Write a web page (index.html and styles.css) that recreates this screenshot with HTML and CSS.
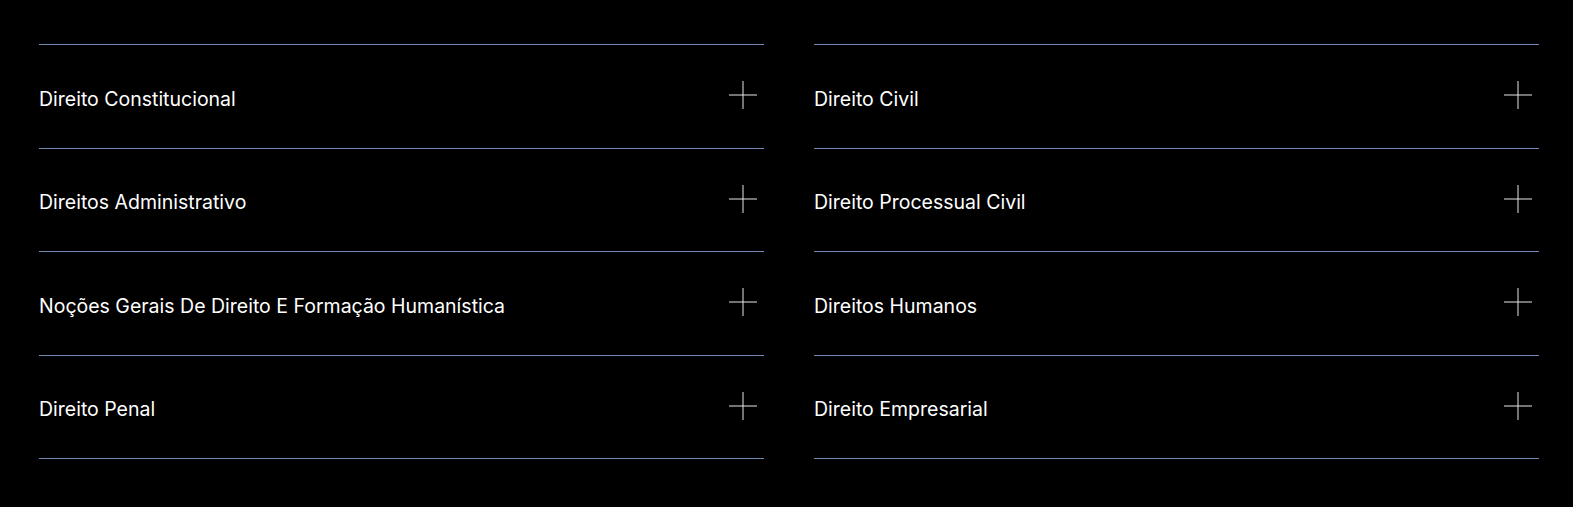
FILE: index.html
```html
<!DOCTYPE html>
<html lang="pt">
<head>
<meta charset="utf-8">
<title>Disciplinas</title>
<link rel="stylesheet" href="styles.css">
</head>
<body>
<div class="grid">
  <div class="col">
    <div class="item"><span class="label">Direito Constitucional</span><svg class="plus" viewBox="0 0 28 28" width="28" height="28"><line x1="0" y1="14" x2="28" y2="14"/><line x1="14" y1="0" x2="14" y2="28"/></svg></div>
    <div class="item"><span class="label">Direitos Administrativo</span><svg class="plus" viewBox="0 0 28 28" width="28" height="28"><line x1="0" y1="14" x2="28" y2="14"/><line x1="14" y1="0" x2="14" y2="28"/></svg></div>
    <div class="item"><span class="label">Noções Gerais De Direito E Formação Humanística</span><svg class="plus" viewBox="0 0 28 28" width="28" height="28"><line x1="0" y1="14" x2="28" y2="14"/><line x1="14" y1="0" x2="14" y2="28"/></svg></div>
    <div class="item"><span class="label">Direito Penal</span><svg class="plus" viewBox="0 0 28 28" width="28" height="28"><line x1="0" y1="14" x2="28" y2="14"/><line x1="14" y1="0" x2="14" y2="28"/></svg></div>
  </div>
  <div class="col">
    <div class="item"><span class="label">Direito Civil</span><svg class="plus" viewBox="0 0 28 28" width="28" height="28"><line x1="0" y1="14" x2="28" y2="14"/><line x1="14" y1="0" x2="14" y2="28"/></svg></div>
    <div class="item"><span class="label">Direito Processual Civil</span><svg class="plus" viewBox="0 0 28 28" width="28" height="28"><line x1="0" y1="14" x2="28" y2="14"/><line x1="14" y1="0" x2="14" y2="28"/></svg></div>
    <div class="item"><span class="label">Direitos Humanos</span><svg class="plus" viewBox="0 0 28 28" width="28" height="28"><line x1="0" y1="14" x2="28" y2="14"/><line x1="14" y1="0" x2="14" y2="28"/></svg></div>
    <div class="item"><span class="label">Direito Empresarial</span><svg class="plus" viewBox="0 0 28 28" width="28" height="28"><line x1="0" y1="14" x2="28" y2="14"/><line x1="14" y1="0" x2="14" y2="28"/></svg></div>
  </div>
</div>
</body>
</html>
```
FILE: styles.css
```css
html, body {
  margin: 0;
  background: #000;
}
body {
  font-family: Inter, "Noto Sans", sans-serif;
  color: #fff;
}
.grid {
  display: grid;
  grid-template-columns: 725px 725px;
  column-gap: 50px;
  padding: 44px 34px 48px 39px;
}
.col {
  border-top: 1px solid #7189b0;
}
.item {
  height: 102.5px;
  border-bottom: 1px solid #7189b0;
  display: flex;
  align-items: center;
  justify-content: space-between;
  padding-right: 7px;
}
.label {
  font-size: 19.5px;
  font-weight: 400;
  letter-spacing: 0;
  padding-top: 5px;
}
.plus {
  display: block;
  stroke: #e6e6e6;
  stroke-width: 1;
  margin-top: -2px;
}
```
